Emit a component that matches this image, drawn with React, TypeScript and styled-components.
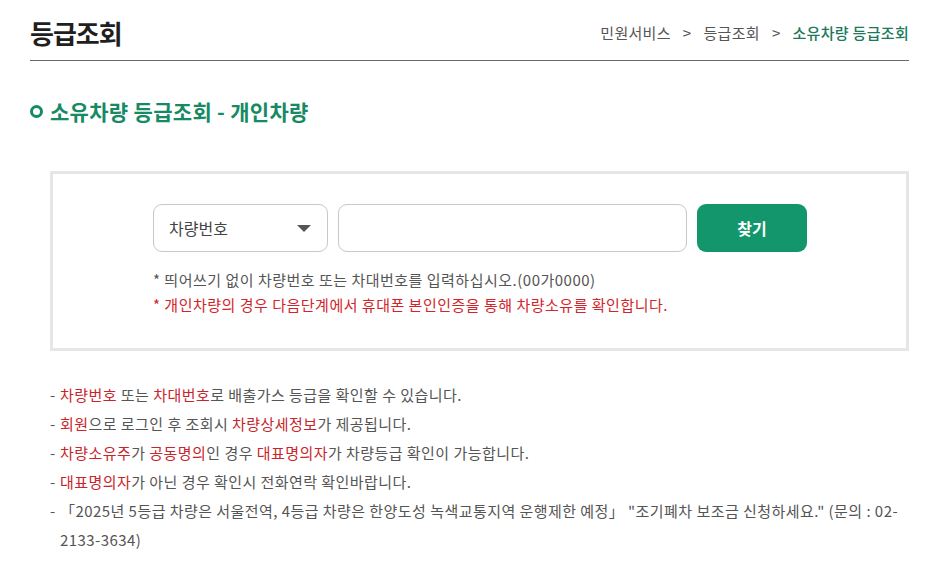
import React from "react";
import styled, { createGlobalStyle } from "styled-components";

const GlobalStyle = createGlobalStyle`
  * { box-sizing: border-box; }
  body {
    margin: 0;
    background: #fff;
    font-family: "Noto Sans CJK KR", "Noto Sans", sans-serif;
  }
`;

const Page = styled.div`
  width: 943px;
  padding: 0 34px 0 30px;
`;

const Header = styled.div`
  display: flex;
  justify-content: space-between;
  align-items: center;
  height: 61px;
  padding-top: 5px;
  border-bottom: 1px solid #6a6a6a;
`;

const PageTitle = styled.h1`
  margin: 0;
  font-size: 26px;
  font-weight: 700;
  color: #1f1f1f;
  letter-spacing: -1px;
`;

const Breadcrumb = styled.div`
  display: flex;
  align-items: center;
  gap: 12px;
  font-size: 15px;
  color: #555;
  letter-spacing: 0.3px;
`;

const Crumb = styled.span<{ $current?: boolean }>`
  color: ${(p) => (p.$current ? "#1b7a5b" : "#555")};
  font-weight: ${(p) => (p.$current ? 500 : 400)};
`;

const SectionTitle = styled.h2`
  display: flex;
  align-items: center;
  gap: 7px;
  margin: 35px 0 0;
  font-size: 21px;
  font-weight: 700;
  color: #158a63;
  letter-spacing: 0.3px;
`;

const Ring = styled.span`
  width: 13px;
  height: 13px;
  border: 3px solid #158a63;
  border-radius: 50%;
  margin-top: 1px;
`;

const SearchBox = styled.div`
  margin: 45px 0 0 20px;
  border: 3px solid #e6e6e6;
  height: 180px;
  padding: 30px 0 0 100px;
`;

const Row = styled.div`
  display: flex;
  gap: 10px;
`;

const SelectBox = styled.div`
  width: 175px;
  height: 48px;
  border: 1px solid #c8c8c8;
  border-radius: 9px;
  display: flex;
  align-items: center;
  justify-content: space-between;
  padding: 0 16px 0 15px;
  font-size: 16px;
  color: #444;
`;

const Arrow = styled.span`
  width: 0;
  height: 0;
  border-left: 7px solid transparent;
  border-right: 7px solid transparent;
  border-top: 7px solid #555;
`;

const TextInput = styled.input`
  width: 349px;
  height: 48px;
  border: 1px solid #c8c8c8;
  border-radius: 9px;
  outline: none;
  padding: 0 14px;
  font-size: 16px;
  font-family: inherit;
`;

const FindButton = styled.button`
  width: 110px;
  height: 48px;
  border: none;
  border-radius: 9px;
  background: #13966b;
  color: #fff;
  font-family: inherit;
  font-size: 16px;
  font-weight: 700;
`;

const Note = styled.p<{ $red?: boolean }>`
  margin: 0;
  font-size: 15px;
  line-height: 25px;
  color: ${(p) => (p.$red ? "#d2252b" : "#555")};
  letter-spacing: 0.5px;
`;

const Notes = styled.div`
  margin-top: 15px;
`;

const InfoList = styled.ul`
  list-style: none;
  margin: 29px 0 0 20px;
  padding: 0;
`;

const InfoItem = styled.li`
  position: relative;
  padding-left: 10px;
  font-size: 15px;
  line-height: 29px;
  color: #555;
  letter-spacing: 0.45px;
  &::before {
    content: "-";
    position: absolute;
    left: 0;
  }
`;

const Red = styled.span`
  color: #c8252c;
`;

export default function App() {
  return (
    <>
      <GlobalStyle />
      <Page>
        <Header>
          <PageTitle>등급조회</PageTitle>
          <Breadcrumb>
            <Crumb>민원서비스</Crumb>
            <Crumb>&gt;</Crumb>
            <Crumb>등급조회</Crumb>
            <Crumb>&gt;</Crumb>
            <Crumb $current>소유차량 등급조회</Crumb>
          </Breadcrumb>
        </Header>

        <SectionTitle>
          <Ring />
          소유차량 등급조회 - 개인차량
        </SectionTitle>

        <SearchBox>
          <Row>
            <SelectBox>
              차량번호
              <Arrow />
            </SelectBox>
            <TextInput />
            <FindButton>찾기</FindButton>
          </Row>
          <Notes>
            <Note>* 띄어쓰기 없이 차량번호 또는 차대번호를 입력하십시오.(00가0000)</Note>
            <Note $red>* 개인차량의 경우 다음단계에서 휴대폰 본인인증을 통해 차량소유를 확인합니다.</Note>
          </Notes>
        </SearchBox>

        <InfoList>
          <InfoItem>
            <Red>차량번호</Red> 또는 <Red>차대번호</Red>로 배출가스 등급을 확인할 수 있습니다.
          </InfoItem>
          <InfoItem>
            <Red>회원</Red>으로 로그인 후 조회시 <Red>차량상세정보</Red>가 제공됩니다.
          </InfoItem>
          <InfoItem>
            <Red>차량소유주</Red>가 <Red>공동명의</Red>인 경우 <Red>대표명의자</Red>가 차량등급 확인이 가능합니다.
          </InfoItem>
          <InfoItem>
            <Red>대표명의자</Red>가 아닌 경우 확인시 전화연락 확인바랍니다.
          </InfoItem>
          <InfoItem>
            「2025년 5등급 차량은 서울전역, 4등급 차량은 한양도성 녹색교통지역 운행제한 예정」 "조기폐차 보조금 신청하세요." (문의 : 02-2133-3634)
          </InfoItem>
        </InfoList>
      </Page>
    </>
  );
}
